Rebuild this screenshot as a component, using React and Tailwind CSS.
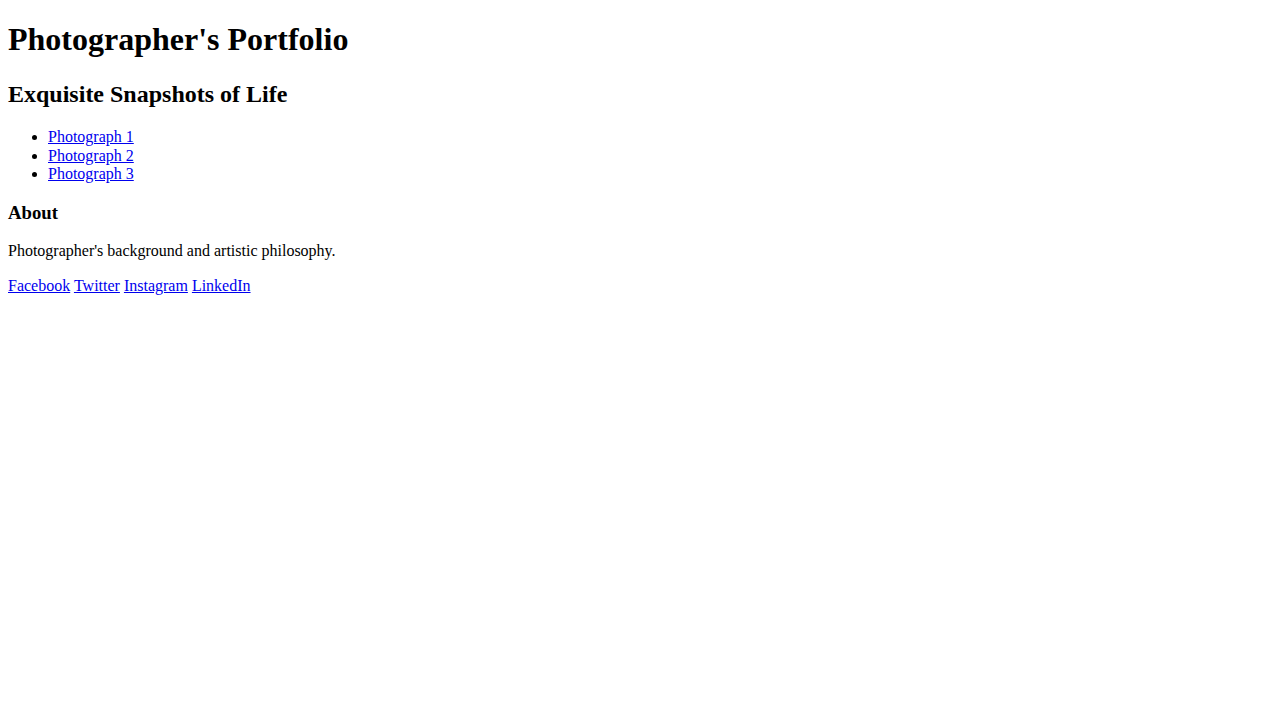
export default function App() {
  const link = "text-[#0000EE] underline";
  return (
    <div className="px-2 bg-white text-black text-[16px] leading-[1.15]">
      <div className="font-['Liberation_Serif','Times_New_Roman',serif]">
        <header>
          <h1 className="text-[32px] font-bold mt-[21.44px] mb-[22.44px]">Photographer's Portfolio</h1>
        </header>
        <main>
          <section>
            <h2 className="text-[24px] font-bold my-[19.92px]">Exquisite Snapshots of Life</h2>
            <ul className="list-disc pl-10 my-4">
              <li><a href="#" className={link}>Photograph 1</a></li>
              <li><a href="#" className={link}>Photograph 2</a></li>
              <li><a href="#" className={link}>Photograph 3</a></li>
            </ul>
          </section>
          <section>
            <h3 className="text-[18.72px] font-bold my-[18.72px]">About</h3>
            <p className="my-4">Photographer's background and artistic philosophy.</p>
          </section>
        </main>
        <footer>
          <a href="#" className={link}>Facebook</a>{" "}
          <a href="#" className={link}>Twitter</a>{" "}
          <a href="#" className={link}>Instagram</a>{" "}
          <a href="#" className={link}>LinkedIn</a>
        </footer>
      </div>
    </div>
  );
}
